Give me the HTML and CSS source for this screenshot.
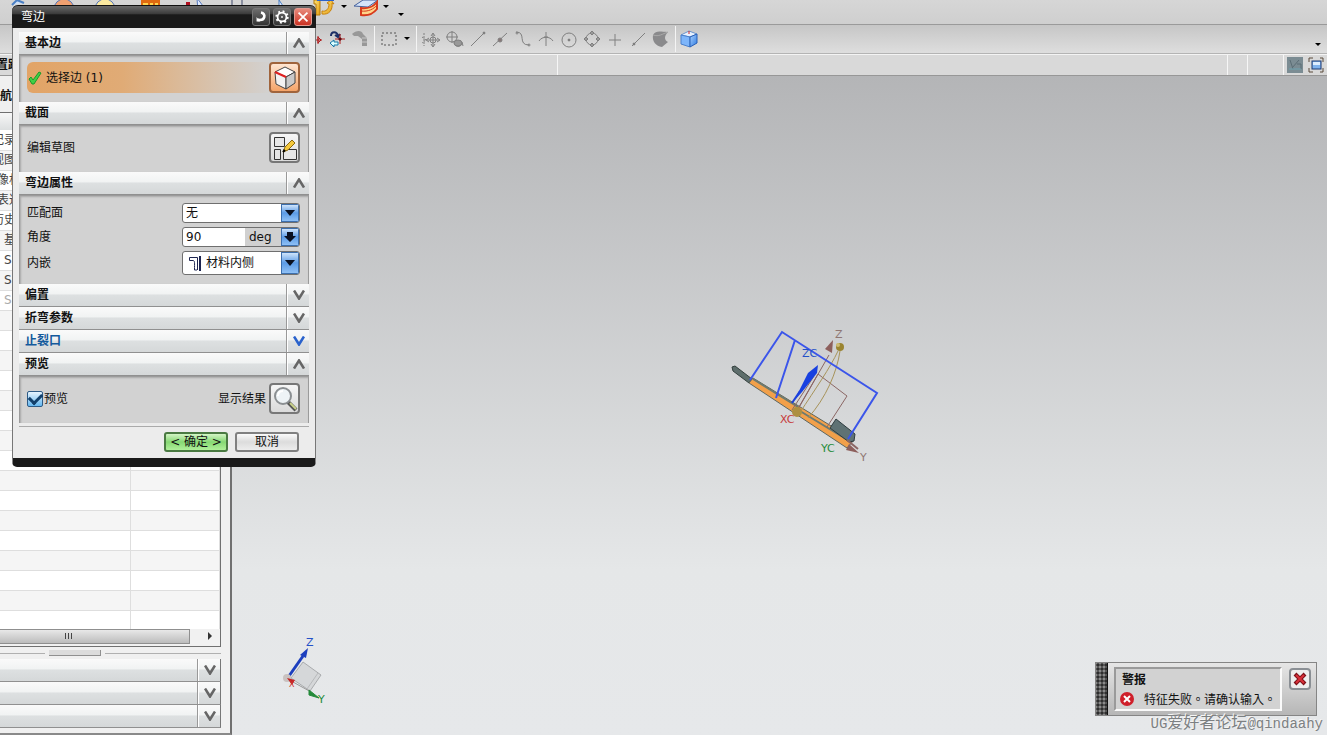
FILE: index.html
```html
<!DOCTYPE html>
<html lang="zh-CN">
<head>
<meta charset="utf-8">
<title>弯边</title>
<link rel="stylesheet" href="styles.css">
</head>
<body>
<svg class="defs" width="0" height="0" aria-hidden="true">
  <defs>
    <symbol id="up" viewBox="0 0 12 10"><path d="M1 9.500L6 1.500L11 9.500" fill="none" stroke="currentColor" stroke-width="2.600"/></symbol>
    <symbol id="down" viewBox="0 0 12 10"><path d="M1 0.500L6 8.500L11 0.500" fill="none" stroke="currentColor" stroke-width="2.600"/></symbol>
    <symbol id="caret" viewBox="0 0 10 10"><path d="M2 3H8L5 6Z" fill="#000"/></symbol>
    <linearGradient id="gold" x1="0" y1="0" x2="1" y2="1"><stop offset="0" stop-color="#ffe77a"/><stop offset="1" stop-color="#e39a10"/></linearGradient>
    <linearGradient id="blueface" x1="0" y1="0" x2="1" y2="1"><stop offset="0" stop-color="#a9d2ff"/><stop offset="1" stop-color="#2f7ae0"/></linearGradient>
  </defs>
</svg>

<header class="bar bar-top">
  <svg class="big"><path d="M-6 5L-1 0L6 3" stroke="#4a7fc4" stroke-width="2" fill="#cfe0f5"/></svg><svg class="caret"></svg>
  <svg class="big"><circle cx="4" cy="9" r="10" fill="#f0a070" stroke="#5577bb"/></svg><svg class="caret"></svg>
  <svg class="big"><circle cx="3" cy="9" r="10" fill="#fbe9a0" stroke="#5577bb"/></svg><svg class="caret"></svg>
  <svg class="big"><path d="M-2 0H15V22H-2Z M5 0V22M10 0V22M-2 2H15" fill="#ffd34d" stroke="#e06a10" stroke-width="2"/></svg><svg class="caret"></svg>
  <svg class="big"><path d="M0 2H4V8H0Z" fill="#b01020"/><path d="M11 -2L20 10L12 12Z" fill="#dfeaff" stroke="#5577bb"/></svg><svg class="caret"></svg>
  <svg class="big"><path d="M4 0V12M14 0V12" stroke="#8a8fa0" stroke-width="2"/></svg><svg class="caret"></svg>
  <svg class="big"><path d="M9 0L17 12L9 14Z" fill="#dfeaff" stroke="#4a7fc4"/></svg><svg class="caret"></svg>
  <svg class="big"><path d="M2 0H8V15H4V4H2Z" fill="url(#gold)" stroke="#b77a08"/><path d="M10 14C17 15 21 10 20 3L22 4L19 0L15 3L17 4C17 9 14 12 10 11Z" fill="url(#gold)" stroke="#c8820c"/><path d="M5 0H22" stroke="#2c62c8" stroke-width="2"/></svg><svg class="caret"><use href="#caret"/></svg>
  <svg class="big"><path d="M0 6L9 0H24L14 7Z" fill="#d5e4fa" stroke="#44609c"/><path d="M7 8C14 9 20 6 23 2V9C19 14 13 16 7 15Z" fill="#ffd58a" stroke="#d83a1c" stroke-width="2"/><path d="M7 11C14 12 20 9 23 5" stroke="#d83a1c" fill="none"/></svg><svg class="caret"><use href="#caret"/></svg>
  <svg class="caret overflow"><use href="#caret"/></svg>
</header>

<nav class="bar bar-snap">
  <svg class="ic"><path d="M10 11H18M14 7V15" fill="none" stroke="#b02020"/><path d="M14 8L17 11L14 14Z" fill="none" stroke="#b02020"/></svg>
  <svg class="ic"><path d="M4 7C4 2 10 2 11 7M8 6L11 8L13 5" fill="none" stroke="#1d2f66" stroke-width="2"/><path d="M3 14L7 11V13H11V16H7V18Z" fill="#dff" stroke="#1578a8"/><path d="M8 10H18M13 5V15" stroke="#b02020"/><path d="M11 10L13 8L15 10L13 12Z" fill="#5a0a10"/></svg>
  <svg class="ic"><path d="M2 5C6 1 12 1 13 5L17 9V17H12V10L8 7H4Z" fill="#989898"/><path d="M12 9H17M12 13H17" stroke="#c8c8c8"/></svg>
  <i class="sep"></i>
  <svg class="ic"><rect x="3" y="4" width="14" height="12" fill="none" stroke="#555" stroke-dasharray="2 2"/></svg>
  <svg class="caret"><use href="#caret"/></svg>
  <i class="sep"></i>
  <svg class="ic gray"><path d="M3 4V17M1 8L5 11L1 14" stroke-dasharray="2 1"/><path d="M6 11H18M12 5V17M10 7L12 4L14 7M10 15L12 18L14 15M8 9L5 11L8 13M16 9L19 11L16 13"/><circle cx="12" cy="11" r="3"/></svg>
  <svg class="ic gray"><circle cx="8" cy="8" r="5"/><path d="M8 2V14M2 8H14M10 12C10 19 17 19 18 14M15 15L18 13L19 17"/><ellipse cx="14" cy="14" rx="4" ry="3" fill="#999"/></svg>
  <svg class="ic gray"><path d="M4 17L17 4"/><circle cx="17" cy="4" r="1" fill="#666"/></svg>
  <svg class="ic gray"><path d="M3 17L17 4"/><circle cx="10" cy="11" r="2" fill="#877"/></svg>
  <svg class="ic gray"><path d="M3 3C14 3 4 16 16 16"/><circle cx="4" cy="4" r="1"/><circle cx="16" cy="16" r="1"/></svg>
  <svg class="ic gray"><path d="M10 3V17M3 12C6 7 14 7 17 12"/><path d="M8 8H12"/></svg>
  <svg class="ic gray"><circle cx="10" cy="11" r="7"/><circle cx="10" cy="11" r="1" fill="#666"/></svg>
  <svg class="ic gray"><circle cx="10" cy="10" r="6"/><path d="M10 2L12 4L10 6L8 4ZM10 14L12 16L10 18L8 16ZM2 10L4 8L6 10L4 12ZM14 10L16 8L18 10L16 12Z" fill="#999"/></svg>
  <svg class="ic gray"><path d="M10 5V17M4 11H16"/></svg>
  <svg class="ic gray"><path d="M4 17L17 4"/><circle cx="6" cy="15" r="1" fill="#666"/></svg>
  <svg class="ic"><path d="M2 6C5 1 9 3 17 3C13 7 13 11 17 13L11 18C5 17 1 13 2 6Z" fill="#8a8a8c"/><path d="M2 6C8 8 11 5 17 3" stroke="#aaa" fill="none"/></svg>
  <i class="sep"></i>
  <svg class="ic"><path d="M1 6L9 2L17 5L10 8Z" fill="#e8f2ff" stroke="#6a94cc"/><path d="M1 6L10 8V18L1 15Z" fill="#7db5fa" stroke="#4a80cc"/><path d="M10 8L17 5V14L10 18Z" fill="url(#blueface)" stroke="#2960b8"/><path d="M9 2V5" stroke="#d02020"/></svg>
  <svg class="caret more"><use href="#caret"/></svg>
</nav>

<div class="bar strip">
  <b class="strip-label">置距</b>
  <span class="strip-fill"></span>
  <span class="strip-cell"></span>
  <span class="strip-cell wide"></span>
  <svg class="strip-icon" viewBox="0 0 16 16"><rect width="16" height="16" fill="#7b8c93"/><path d="M3 3L6 12M12 3L5 11M10 7H14V12" stroke="#5b6d75" fill="none"/><path d="M2 12H14" stroke="#6fa3b0"/></svg>
  <svg class="strip-icon" viewBox="0 0 16 16"><rect x="4" y="4" width="9" height="8" fill="#7fb2ee" stroke="#1d3870"/><rect x="5" y="5" width="7" height="3" fill="#dcecff"/><path d="M1 5V1H5M12 1H15V5M15 11V15H12M5 15H1V11" fill="none" stroke="#5a4a3a"/></svg>
</div>

<main class="work">
  <aside class="panel">
    <h2 class="panel-title">航器</h2>
    <div class="tree">
      <div class="tree-head"></div>
      <div class="tree-body">
        <table>
          <colgroup><col class="c1"><col></colgroup>
          <tbody>
          <tr><td>记录</td><td></td></tr><tr><td>视图</td><td></td></tr>
          <tr><td class="in1">像机</td><td></td></tr><tr><td class="in1">表达</td><td></td></tr>
          <tr><td>历史</td><td></td></tr><tr><td class="in2">基准</td><td></td></tr>
          <tr><td class="in2">SK</td><td></td></tr><tr><td class="in2">SK</td><td></td></tr>
          <tr><td class="in2 dim">SK</td><td></td></tr><tr><td></td><td></td></tr>
          <tr><td></td><td></td></tr><tr><td></td><td></td></tr><tr><td></td><td></td></tr>
          <tr><td></td><td></td></tr><tr><td></td><td></td></tr><tr><td></td><td></td></tr>
          <tr><td></td><td></td></tr><tr><td></td><td></td></tr><tr><td></td><td></td></tr>
          <tr><td></td><td></td></tr><tr><td></td><td></td></tr><tr><td></td><td></td></tr>
          <tr><td></td><td></td></tr><tr><td></td><td></td></tr><tr><td></td><td></td></tr>
          </tbody>
        </table>
      </div>
      <div class="scroll"><div class="thumb"><i></i><i></i><i></i></div><svg class="scroll-arrow" viewBox="0 0 8 8"><path d="M2 0L6 4L2 8Z" fill="#333"/></svg></div>
    </div>
    <div class="splitter"><i></i></div>
    <button class="head" aria-label="相关性"><span class="head-text"></span><span class="chev"><svg><use href="#down"/></svg></span></button>
    <button class="head" aria-label="细节"><span class="head-text"></span><span class="chev"><svg><use href="#down"/></svg></span></button>
    <button class="head" aria-label="预览面板"><span class="head-text"></span><span class="chev"><svg><use href="#down"/></svg></span></button>
  </aside>

  <section class="canvas">
    <svg class="model" viewBox="0 0 170 150">
      <path d="M12 47L15 46L32 59L29 63L13 51Z" fill="#5e6e6c" stroke="#33403e"/>
      <path d="M29 63L33 58L134 120L127 128Z" fill="#f2a04a" stroke="#5d665f"/>
      <path d="M33 59L78 87M80 91L126 119" stroke="#6d7a70" stroke-width="2"/>
      <path d="M116 99L135 114L134 121L129 122L110 108Z" fill="#5f7274" stroke="#2e3c40"/>
      <path d="M76 92L98 54L127 76L107 107M72 90L94 56" fill="none" stroke="#8b6664"/>
      <path d="M77 91L109 35" fill="none" stroke="#8b6664"/>
      <path d="M79 94C96 68 110 48 118 31M88 98C106 78 117 52 120 31" fill="none" stroke="#a7935a"/>
      <path d="M127 120L138 129" stroke="#8b6664" stroke-width="2"/>
      <path d="M113 20L112 33L105 29Z" fill="#8d5f5c"/><path d="M139 133L126 130L129 124Z" fill="#8d5f5c"/>
      <path d="M30 60L62 12L157 73L128 119M75 20L56 78" fill="none" stroke="#3b55ea" stroke-width="2"/>
      <path d="M72 83L80 71" stroke="#2040d8" stroke-width="2"/><path d="M98 45L97 53L82 72L74 81L88 53Z" fill="#1840e0"/>
      <circle cx="120" cy="27" r="4" fill="#9a8430"/><circle cx="118" cy="25" r="2" fill="#cdbb72"/>
      <circle cx="77" cy="92" r="5" fill="#ad9042"/>
      <text x="82" y="37" fill="#2451c8">ZC</text><text x="60" y="103" fill="#c73b3b">XC</text><text x="101" y="132" fill="#258b3a">YC</text>
      <text x="115" y="18" fill="#8f7773">Z</text><text x="140" y="141" fill="#8f7773">Y</text>
    </svg>
    <svg class="triad" viewBox="0 0 60 76">
      <path d="M26 28L44 41L33 57L14 44Z" fill="#d5d7d9" stroke="#a9abad"/><path d="M41 39L30 55" stroke="#b8babc"/>
      <path d="M12 42L26 22" stroke="#1d3fbe" stroke-width="3"/><path d="M31 14L29 24L23 21Z" fill="#1d3fbe"/>
      <path d="M16 48L34 58" stroke="#999"/><path d="M32 56L42 64L32 61Z" fill="#258b3a" stroke="#258b3a"/>
      <circle cx="10" cy="44" r="4" fill="#c9c2c0"/><path d="M10 44L18 46L15 51Z" fill="#c02222"/><text x="12" y="53" class="tiny" fill="#d03030">X</text>
      <text x="29" y="12" fill="#2451c8">Z</text><text x="41" y="69" fill="#258b3a">Y</text>
    </svg>
    <div class="alert" role="alert">
      <div class="grip"></div>
      <div class="alert-box">
        <strong>警报</strong>
        <p><svg viewBox="0 0 14 14"><circle cx="7" cy="7" r="7" fill="#cf1f2a"/><path d="M4 4L10 10M10 4L4 10" stroke="#fff" stroke-width="2"/></svg><span>特征失败。请确认输入。</span></p>
      </div>
      <button class="alert-close" aria-label="关闭"><svg viewBox="0 0 14 14"><path d="M2 2L12 12M12 2L2 12" stroke="#7d1018" stroke-width="4"/><path d="M3 3L11 11M11 3L3 11" stroke="#d9303a" stroke-width="2"/></svg></button>
    </div>
    <div class="mark"><span>UG</span>爱好者论坛<span>@qindaahy</span></div>
  </section>
</main>

<form class="dialog" aria-labelledby="dlg-title">
  <div class="dlg-title">
    <span id="dlg-title">弯边</span>
    <button type="button" class="tbtn" aria-label="重置"><svg viewBox="0 0 18 18"><path d="M9 4C15 5 14 14 5 12" fill="none" stroke="#fff" stroke-width="3"/><path d="M4 9V14L8 14Z" fill="#fff"/></svg></button>
    <button type="button" class="tbtn" aria-label="选项"><svg viewBox="0 0 18 18"><circle cx="9" cy="9" r="6" fill="none" stroke="#fff" stroke-width="3" stroke-dasharray="2 2.700"/><circle cx="9" cy="9" r="5" fill="none" stroke="#fff" stroke-width="2"/><circle cx="9" cy="9" r="1" fill="#fff"/></svg></button>
    <button type="button" class="tbtn close" aria-label="关闭"><svg viewBox="0 0 18 18"><path d="M4 4L14 14M14 4L4 14" stroke="#fff" stroke-width="2"/></svg></button>
  </div>
  <div class="dlg-main">
    <button type="button" class="head"><span class="head-text">基本边</span><span class="chev"><svg><use href="#up"/></svg></span></button>
    <div class="group">
      <div class="row pick">
        <span class="pick-label"><svg viewBox="0 0 14 14"><path d="M1 8L3 6L5 9L11 1L13 2L6 13H4Z" fill="#3fd045" stroke="#1a9a2a"/></svg>选择边 (1)</span>
        <button type="button" class="tool active" aria-label="选择边"><svg viewBox="0 0 26 26"><path d="M3 7L13 2L23 7L14 12Z" fill="#fff" stroke="#444"/><path d="M3 7L14 12V24L4 19Z" fill="#f2f2f2" stroke="#444"/><path d="M14 12L23 7V18L14 24Z" fill="#c9c9c9" stroke="#444"/><path d="M3 7L14 12" stroke="#e02020" stroke-width="2"/></svg></button>
      </div>
    </div>
    <button type="button" class="head"><span class="head-text">截面</span><span class="chev"><svg><use href="#up"/></svg></span></button>
    <div class="group">
      <div class="row">
        <span>编辑草图</span>
        <button type="button" class="tool" aria-label="编辑草图"><svg viewBox="0 0 26 26"><path d="M2.500 2.500H12.500V11.500H2.500ZM2.500 14.500H8.500V24.500H2.500ZM11.500 14.500H24.500V24.500H11.500Z" fill="#e6e6e6" stroke="#333"/><path d="M11 17L13 12L20 5L23 8L16 15Z" fill="#f5c83a" stroke="#8a6a10"/><path d="M11 17L13 15" stroke="#000" stroke-width="2"/></svg></button>
      </div>
    </div>
    <button type="button" class="head"><span class="head-text">弯边属性</span><span class="chev"><svg><use href="#up"/></svg></span></button>
    <div class="group fields">
      <div class="row"><label for="face">匹配面</label>
        <span class="combo"><select id="face"><option>无</option></select><span class="arrow"><svg viewBox="0 0 16 16"><path d="M3 5H13L8 11Z"/></svg></span></span></div>
      <div class="row"><label for="angle">角度</label>
        <span class="combo number"><input id="angle" type="text" value="90"><span class="unit">deg</span><button type="button" class="arrow" aria-label="角度选项"><svg viewBox="0 0 16 16"><path d="M5 3H11V7H14L8 13L2 7H5Z"/></svg></button></span></div>
      <div class="row tall"><label for="inset">内嵌</label>
        <span class="combo"><select id="inset" class="with-icon"><option>材料内侧</option></select><svg class="combo-icon" viewBox="0 0 14 16"><path d="M1.500 2.500H9.500V15M1.500 2.500V5.500H5C7 5.500 6.500 8 6.500 15H9" fill="none" stroke="#1c2450"/><path d="M12 1V16" stroke="#1c2450" stroke-width="2"/></svg><span class="arrow"><svg viewBox="0 0 16 16"><path d="M3 5H13L8 11Z"/></svg></span></span></div>
    </div>
    <button type="button" class="head"><span class="head-text">偏置</span><span class="chev"><svg><use href="#down"/></svg></span></button>
    <button type="button" class="head"><span class="head-text">折弯参数</span><span class="chev"><svg><use href="#down"/></svg></span></button>
    <button type="button" class="head blue"><span class="head-text">止裂口</span><span class="chev"><svg><use href="#down"/></svg></span></button>
    <button type="button" class="head"><span class="head-text">预览</span><span class="chev"><svg><use href="#up"/></svg></span></button>
    <div class="group">
      <div class="row">
        <label class="check"><input type="checkbox" checked>预览</label>
        <span class="result">显示结果<button type="button" class="tool" aria-label="显示结果"><svg viewBox="0 0 26 26"><path d="M16 16L24 24" stroke="#555" stroke-width="4"/><path d="M18 17L24 23" stroke="#c9d08a" stroke-width="2"/><circle cx="11" cy="10" r="8" fill="#eef3f6" stroke="#8b8f92" stroke-width="2"/><path d="M6 10C6 7 8 5 11 5" stroke="#fff" stroke-width="2" fill="none"/></svg></button></span>
      </div>
    </div>
    <div class="actions"><button type="submit" class="ok">&lt; 确定 &gt;</button><button type="button">取消</button></div>
  </div>
</form>
</body>
</html>
```
FILE: styles.css
```css
* { box-sizing: border-box; }
body {
  margin: 0;
  height: 100vh;
  display: flex;
  flex-direction: column;
  overflow: hidden;
  position: relative;
  font: 12px/16px "DejaVu Sans", "Noto Sans CJK SC", sans-serif;
  color: #111;
  background: #e6e8ea;
}
button, input, select { font: inherit; color: inherit; margin: 0; padding: 0; }
button { cursor: pointer; }
svg { display: block; flex: none; }
.defs { position: absolute; }

.bar { display: flex; flex: none; }
.bar-top {
  height: 25px;
  padding-left: 18px;
  background: linear-gradient(#d6d6d6, #cfcfcf);
  border-bottom: 1px solid #9a9a9a;
}
.big { width: 24px; height: 24px; overflow: visible; }
.caret { width: 10px; height: 10px; }
.big + .caret { margin: 2px 5px 0 3px; }
.caret.overflow { margin: 10px 0 0; }
.bar-snap {
  height: 29px;
  padding-left: 304px;
  gap: 3px;
  align-items: center;
  background: linear-gradient(#c6c6c6, #dedede);
  border-bottom: 1px solid #b4b4b4;
}
.ic { width: 20px; height: 20px; }
.gray { fill: none; stroke: #808080; }
.sep { width: 1px; height: 26px; margin: 0 1px; background: #f4f4f4; }
.more { margin: 12px 4px 0 auto; }
.strip {
  height: 22px;
  background: #d9d9d9;
  border-top: 1px solid #f4f4f4;
  border-bottom: 1px solid #979797;
}
.strip-label { width: 558px; padding-top: 2px; border-right: 1px solid #f6f6f6; overflow: hidden; text-indent: -4px; }
.strip-fill { flex: 1; border-right: 1px solid #f6f6f6; }
.strip-cell { width: 20px; border-right: 1px solid #f6f6f6; }
.strip-cell.wide { width: 36px; }
.strip-icon { width: 16px; height: 16px; margin: 2px 2px 0 3px; }
.strip-icon:last-child { margin-right: 3px; }

.work { flex: 1; min-height: 0; display: flex; }
.panel {
  width: 232px;
  display: flex;
  flex-direction: column;
  padding-bottom: 5px;
  background: #f0f0f0;
  border-right: 2px solid #707070;
  border-bottom: 2px solid #8a8a8a;
}
.panel-title { margin: 0; height: 36px; padding-top: 12px; font-size: 12px; line-height: 16px; }
.tree {
  flex: 1;
  min-height: 0;
  width: 221px;
  display: flex;
  flex-direction: column;
  border: solid #707070;
  border-width: 1px 1px 1px 0;
}
.tree-head { height: 17px; flex: none; background: linear-gradient(#f7f7f7, #dcdfe0); }
.tree-body { flex: 1; min-height: 0; overflow: hidden; background: #fff; }
.tree-body table { width: 228px; margin-left: -8px; border-collapse: collapse; table-layout: fixed; }
.c1 { width: 138px; }
.tree-body td {
  height: 20px;
  padding: 0;
  line-height: 16px;
  color: #444;
  border-bottom: 1px solid #dedede;
  border-right: 1px solid #dedede;
}
.tree-body tr:nth-child(even) { background: #f5f5f5; }
.tree-body td.in1 { padding-left: 5px; }
.tree-body td.in2 { padding-left: 12px; }
.tree-body td.dim { color: #aaa; }
.scroll { flex: none; height: 17px; display: flex; justify-content: space-between; align-items: flex-start; background: #f1f1f1; }
.thumb {
  width: 190px;
  height: 15px;
  display: flex;
  gap: 2px;
  padding: 3px 0 0 65px;
  background: linear-gradient(#e8e8e8, #bcbcbc);
  border: 1px solid #8f8f8f;
  border-left: 0;
}
.thumb i { width: 1px; height: 6px; background: #444; }
.scroll-arrow { width: 8px; height: 8px; margin: 3px 6px 0 0; }
.splitter { flex: none; height: 12px; width: 221px; display: flex; align-items: center; }
.splitter::before { content: ""; width: 45px; height: 1px; background: #b0b0b0; }
.splitter::after { content: ""; flex: 1; height: 1px; background: #b0b0b0; }
.splitter i { width: 52px; height: 6px; margin: 0 4px; background: #dcdcdc; border: solid #909090; border-width: 0 1px 1px 0; }
.panel .head { width: 221px; border-right: 1px solid #777; }

.head {
  width: 100%;
  height: 23px;
  flex: none;
  display: flex;
  align-items: stretch;
  text-align: left;
  font-weight: bold;
  background: linear-gradient(#fafafa, #f1f3f3 45%, #dde0e1 50%, #d5d8d9);
  border: solid #909090;
  border-width: 0 0 1px;
}
.head-text { flex: 1; padding: 3px 6px; border-right: 1px solid #999; }
.chev { width: 22px; display: grid; place-items: center; border-left: 1px solid #fff; color: #666; }
.chev svg { width: 12px; height: 10px; }
.head.blue .head-text { color: #145a9c; }
.head.blue .chev { color: #2a62cc; }

.canvas { flex: 1; position: relative; background: linear-gradient(#b4b5b7, #e5e7e8 75%, #e6e8ea); }
.canvas svg text { font: 11px "DejaVu Sans", sans-serif; }
.canvas svg text.tiny { font-size: 8px; }
.model { position: absolute; left: 488px; top: 244px; width: 170px; height: 150px; }
.triad { position: absolute; left: 45px; bottom: 25px; width: 60px; height: 76px; }
.alert {
  position: absolute;
  right: 10px;
  bottom: 19px;
  width: 222px;
  display: flex;
  background: linear-gradient(#e6e6e6, #b6b6b6);
  border: 1px solid #858585;
}
.grip {
  width: 12px;
  margin-right: 6px;
  background: radial-gradient(circle at 2px 2px, #8a8a8a 1px, #2e2e2e 2px) 2px 2px / 4px 4px;
  border-right: 1px solid #111;
}
.alert-box { flex: 1; margin: 4px 0; padding: 2px 4px 1px; background: #d2d2d2; border: 2px solid; border-color: #9a9a9a #fafafa #fafafa #9a9a9a; }
.alert-box strong { display: block; padding-left: 2px; line-height: 18px; }
.alert-box p {
  margin: 0;
  display: flex;
  align-items: center;
  gap: 10px;
  line-height: 19px;
  white-space: nowrap;
  font-family: "Noto Sans CJK TC", "Noto Sans CJK SC", sans-serif;
  font-feature-settings: "locl" 0;
}
.alert-box p svg { width: 14px; height: 14px; }
.alert-close { width: 22px; height: 22px; margin: 5px 5px 0 7px; display: grid; place-items: center; background: #eee; border: 2px solid #8a8f94; border-radius: 4px; }
.alert-close svg { width: 14px; height: 14px; }
.mark { position: absolute; right: 4px; bottom: 0; font: 16px/22px "Noto Sans CJK SC", sans-serif; color: #7c8082; text-shadow: -1px -1px #f6f6f6; white-space: nowrap; }
.mark span { font: 14px/22px "Liberation Mono", monospace; }

.dialog {
  position: absolute;
  left: 12px;
  top: 5px;
  width: 304px;
  background: #ececec;
  border: solid #777;
  border-width: 0 1px;
  border-bottom: 9px solid #1a1a1a;
  border-radius: 6px 6px 5px 5px;
}
.dlg-title {
  height: 23px;
  margin: 0 -1px;
  display: flex;
  align-items: center;
  gap: 3px;
  padding: 0 4px 0 9px;
  background: linear-gradient(#6a6a6a, #3c3c3c 35%, #1a1a1a 40%, #1a1a1a);
  border-top: 1px solid #111;
  border-radius: 6px 6px 0 0;
  color: #fff;
}
.dlg-title > span { flex: 1; }
.tbtn { width: 18px; height: 18px; background: linear-gradient(#6d6d6d, #333); border: 1px solid #777; border-radius: 3px; }
.tbtn svg { width: 16px; height: 16px; }
.tbtn.close { background: linear-gradient(#e88a7c, #cc3324); border-color: #e39a90; }
.dlg-main { padding: 4px 6px 6px; }
.group {
  padding: 6px 8px 9px 7px;
  background: #d2d2d2;
  border: solid #9b9b9b;
  border-width: 1px 1px 0;
  box-shadow: inset 1px 1px 2px #a8a8a8;
}
.row { display: flex; align-items: center; justify-content: space-between; }
.pick { background: linear-gradient(90deg, #e2a466, #e0ab76 35%, #d2d2d2 90%); border-radius: 6px; }
.pick-label { display: flex; align-items: center; gap: 4px; padding-left: 1px; }
.pick-label svg { width: 14px; height: 14px; }
.tool {
  width: 31px;
  height: 31px;
  display: grid;
  place-items: center;
  background: linear-gradient(#f6f6f6, #dadada);
  border: 2px solid #777;
  border-radius: 4px;
}
.tool svg { width: 26px; height: 26px; }
.tool.active { background: linear-gradient(#ffe6d2, #f5a468); border-color: #a0643c; }
.fields { display: flex; flex-direction: column; gap: 4px; padding: 7px 8px 9px 7px; }
.combo {
  width: 118px;
  height: 20px;
  display: grid;
  grid-template-columns: 1fr 18px;
  background: #fff;
  border: 1px solid #6f6f6f;
  border-radius: 3px;
  overflow: hidden;
}
.combo.number { grid-template-columns: 62px 1fr 18px; }
.tall .combo { height: 24px; }
.combo select, .combo input { width: 100%; min-width: 0; padding: 0 3px; border: 0; background: none; appearance: none; outline: 0; }
.combo select { grid-area: 1 / 1 / 2 / 3; }
.combo select.with-icon { padding-left: 23px; }
.combo-icon { grid-area: 1 / 1; place-self: center start; width: 14px; height: 16px; margin-left: 5px; pointer-events: none; }
.unit { padding-left: 4px; line-height: 18px; background: #d0d0d0; }
.arrow {
  display: grid;
  place-items: center;
  background: linear-gradient(#cfe4fb, #5b9be6 50%, #8fc0f5);
  border: 1px solid #3c6fae;
}
select ~ .arrow { grid-area: 1 / 2; pointer-events: none; }
.arrow svg { width: 16px; height: 16px; fill: #0a1020; }
.check { display: flex; align-items: center; gap: 1px; }
.check input {
  appearance: none;
  width: 16px;
  height: 16px;
  display: grid;
  place-items: center;
  background: linear-gradient(#e6f4ff, #66b8f0);
  border: 1px solid #2d5b86;
  border-radius: 2px;
}
.check input:checked::before { content: ""; width: 10px; height: 6px; margin-top: -3px; border: solid #12406c; border-width: 0 0 3px 3px; transform: rotate(-45deg); }
.result { display: flex; align-items: center; gap: 3px; }
.actions { display: flex; justify-content: flex-end; gap: 7px; margin-top: 3px; padding: 5px 10px 0 0; border-top: 1px solid #aaa; }
.actions button { width: 64px; height: 20px; line-height: 16px; background: linear-gradient(#fafafa, #dcdcdc 50%, #ededed); border: 2px solid #808080; border-radius: 3px; }
.actions .ok { background: linear-gradient(#d3f5c5, #86d873 50%, #b0f09a); border-color: #4a7a42; }
```
